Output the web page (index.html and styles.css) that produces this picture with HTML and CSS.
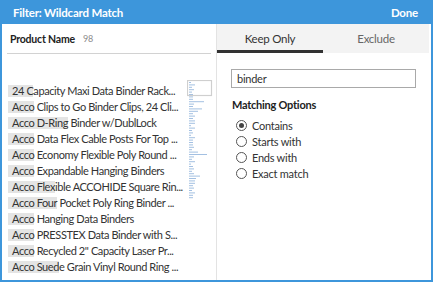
FILE: index.html
```html
<!DOCTYPE html>
<html lang="en">
<head>
  <meta charset="UTF-8">
  <title>Filter: Wildcard Match</title>
  <link rel="stylesheet" href="styles.css">
</head>
<body>
  <div class="dialog">
    <header class="titlebar">
      <span class="title">Filter: Wildcard Match</span>
      <span class="done">Done</span>
    </header>

    <div class="content">
      <!-- left side: field values -->
      <div class="field-pane">
        <div class="field-head">
          <span class="field-name">Product Name</span>
          <span class="field-count">98</span>
        </div>
        <div class="list-wrap">
          <ul class="values">
            <li><span class="hit">24 C</span>apacity Maxi Data Binder Rack...</li>
            <li><span class="hit">Acco</span> Clips to Go Binder Clips, 24 Cli...</li>
            <li><span class="hit">Acco D-Ring</span> Binder w/DublLock</li>
            <li><span class="hit">Acco</span> Data Flex Cable Posts For Top ...</li>
            <li><span class="hit">Acco</span> Economy Flexible Poly Round ...</li>
            <li><span class="hit">Acco</span> Expandable Hanging Binders</li>
            <li><span class="hit">Acco Flex</span>ible ACCOHIDE Square Rin...</li>
            <li><span class="hit">Acco Four</span> Pocket Poly Ring Binder ...</li>
            <li><span class="hit">Acco</span> Hanging Data Binders</li>
            <li><span class="hit">Acco</span> PRESSTEX Data Binder with S...</li>
            <li><span class="hit">Acco</span> Recycled 2" Capacity Laser Pr...</li>
            <li><span class="hit">Acco Sued</span>e Grain Vinyl Round Ring ...</li>
          </ul>
          <svg class="minimap" width="26" height="122" viewBox="0 0 26 122">
            <g fill="#a3c0e2">
              <rect x="2" y="2" width="2" height="1"/>
              <rect x="2" y="4.4" width="6" height="1"/>
              <rect x="2" y="6.8" width="3" height="1"/>
              <rect x="2" y="9.2" width="5" height="1"/>
              <rect x="2" y="11.6" width="3" height="1"/>
              <rect x="2" y="14" width="4" height="1"/>
              <rect x="2" y="16.4" width="4" height="1"/>
              <rect x="2" y="18.8" width="4" height="1"/>
              <rect x="2" y="21.2" width="15" height="1"/>
              <rect x="2" y="23.6" width="5" height="1"/>
              <rect x="2" y="26" width="4" height="1"/>
              <rect x="2" y="28.4" width="13" height="1"/>
              <rect x="2" y="30.8" width="9" height="1"/>
              <rect x="2" y="33.2" width="4" height="1"/>
              <rect x="2" y="35.6" width="6" height="1"/>
              <rect x="2" y="38" width="4" height="1"/>
              <rect x="2" y="40.4" width="6" height="1"/>
              <rect x="2" y="42.8" width="6" height="1"/>
              <rect x="2" y="45.2" width="2" height="1"/>
              <rect x="2" y="47.6" width="6" height="1"/>
              <rect x="2" y="50" width="3" height="1"/>
              <rect x="2" y="52.4" width="4" height="1"/>
              <rect x="2" y="54.8" width="2" height="1"/>
              <rect x="2" y="57.2" width="6" height="1"/>
              <rect x="2" y="59.6" width="4" height="1"/>
              <rect x="2" y="62" width="4" height="1"/>
              <rect x="2" y="64.4" width="4" height="1"/>
              <rect x="2" y="66.8" width="5" height="1"/>
              <rect x="2" y="69.2" width="3" height="1"/>
              <rect x="2" y="71.6" width="9" height="1"/>
              <rect x="2" y="74" width="18" height="1"/>
              <rect x="2" y="76.4" width="5" height="1"/>
              <rect x="2" y="78.8" width="3" height="1"/>
              <rect x="2" y="81.2" width="6" height="1"/>
              <rect x="2" y="83.6" width="2" height="1"/>
              <rect x="2" y="86" width="4" height="1"/>
              <rect x="2" y="88.4" width="5" height="1"/>
              <rect x="2" y="90.8" width="3" height="1"/>
              <rect x="2" y="93.2" width="5" height="1"/>
              <rect x="2" y="95.6" width="11" height="1"/>
              <rect x="2" y="98" width="7" height="1"/>
              <rect x="2" y="100.4" width="6" height="1"/>
              <rect x="2" y="102.8" width="6" height="1"/>
              <rect x="2" y="105.2" width="4" height="1"/>
              <rect x="2" y="107.6" width="5" height="1"/>
              <rect x="2" y="110" width="3" height="1"/>
              <rect x="2" y="112.4" width="6" height="1"/>
              <rect x="2" y="114.8" width="4" height="1"/>
              <rect x="2" y="117.2" width="4" height="1"/>
            </g>
            <rect x="0.5" y="0.5" width="24" height="15" fill="none" stroke="#cfcfcf" stroke-width="1.2"/>
          </svg>
        </div>
      </div>

      <!-- right side: match settings -->
      <div class="match-pane">
        <div class="tabs">
          <div class="tab active">Keep Only</div>
          <div class="tab">Exclude</div>
        </div>
        <div class="match-body">
          <input type="text" class="pattern" value="binder">
          <h3 class="options-head">Matching Options</h3>
          <label class="option"><span class="radio checked"></span>Contains</label>
          <label class="option"><span class="radio"></span>Starts with</label>
          <label class="option"><span class="radio"></span>Ends with</label>
          <label class="option"><span class="radio"></span>Exact match</label>
        </div>
      </div>
    </div>
  </div>
</body>
</html>
```

FILE: styles.css
```css
body {
  margin: 0;
  padding: 0;
  background-color: #fff;
  font-family: 'Lato', 'Open Sans', sans-serif;
  font-size: 11px;
  letter-spacing: -0.25px;
  color: #333;
}
.dialog {
  width: 433px;
  height: 282px;
  box-sizing: border-box;
  border: 2px solid #3d96db;
  border-top: none;
  display: flex;
  flex-direction: column;
}
.titlebar {
  height: 24px;
  flex: none;
  background-color: #3d96db;
  color: #fff;
  font-weight: bold;
  font-size: 11.5px;
  letter-spacing: -0.2px;
  display: flex;
  align-items: center;
  justify-content: space-between;
  padding: 0 13px 0 11px;
}
.content {
  flex: 1;
  display: flex;
  min-height: 0;
}
.field-pane {
  width: 214px;
  flex: none;
  border-right: 1px solid #e3e3e3;
}
.field-head {
  margin: 0 5px;
  height: 29px;
  border-bottom: 1px solid #d2d2d2;
  display: flex;
  align-items: center;
  padding-left: 3px;
}
.field-name {
  font-weight: bold;
  font-size: 10.5px;
  letter-spacing: -0.2px;
  color: #222;
}
.field-count {
  color: #8c8c8c;
  font-size: 9px;
  margin-left: 8px;
}
.list-wrap {
  display: flex;
  margin-top: 29px;
  padding-left: 6px;
}
.values {
  list-style: none;
  margin: 0;
  padding: 0;
  width: 176px;
  letter-spacing: -0.4px;
}
.values li {
  height: 16px;
  line-height: 16px;
  white-space: nowrap;
  overflow: hidden;
}
.hit {
  background-color: #e4e4e4;
  display: inline-block;
  vertical-align: middle;
  line-height: 12px;
  height: 12px;
  margin-top: -2px;
  padding-left: 4px;
}
.minimap {
  margin-left: 3px;
  margin-top: -3px;
}
.match-pane {
  flex: 1;
  display: flex;
  flex-direction: column;
  padding-right: 2px;
}
.tabs {
  display: flex;
  height: 29px;
  background-color: #f3f3f3;
}
.tab {
  flex: 1;
  display: flex;
  align-items: center;
  justify-content: center;
  color: #666;
  font-size: 11.5px;
}
.tab.active {
  color: #333;
  border-bottom: 3px solid #333;
  padding-top: 3px;
}
.match-body {
  padding: 16px 12px 0 14px;
  display: flex;
  flex-direction: column;
  align-items: flex-start;
}
.pattern {
  width: 185px;
  height: 19px;
  box-sizing: border-box;
  border: 1px solid #a9a9a9;
  padding: 0 5px;
  font-family: inherit;
  font-size: 11px;
  letter-spacing: -0.25px;
  color: #333;
  outline: none;
}
.options-head {
  margin: 10px 0 6px 1px;
  font-size: 11px;
  font-weight: bold;
  color: #222;
}
.option {
  display: flex;
  align-items: center;
  height: 16px;
  padding-left: 5px;
}
.radio {
  width: 9px;
  height: 9px;
  border: 1px solid #555;
  border-radius: 50%;
  margin-right: 5px;
  position: relative;
}
.radio.checked::after {
  content: "";
  position: absolute;
  left: 2px;
  top: 2px;
  width: 5px;
  height: 5px;
  border-radius: 50%;
  background-color: #444;
}
```
